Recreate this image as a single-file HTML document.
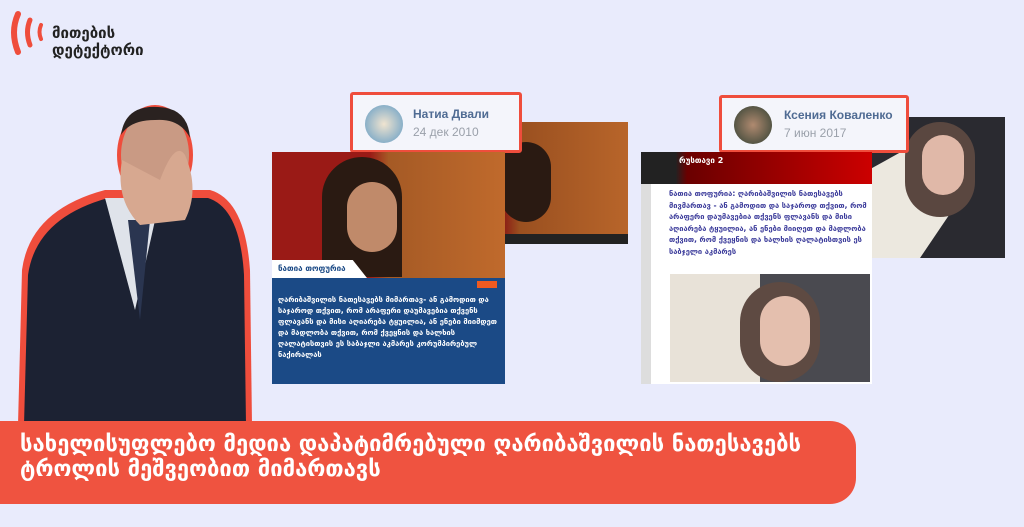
<!DOCTYPE html>
<html><head><meta charset="utf-8"><style>
*{margin:0;padding:0;box-sizing:border-box}
body{width:1024px;height:527px;background:#e9ebfc;position:relative;overflow:hidden;font-family:"Liberation Sans","DejaVu Sans",sans-serif}
.abs{position:absolute}
.namecard{background:#f4f5fb;border:3px solid #ef4d3c;border-radius:3px}
.nm{color:#4f6b93;font-weight:bold;font-size:12px;white-space:nowrap}
.dt{color:#9aa0aa;font-size:12px}
</style></head><body>
<!-- logo -->
<svg class="abs" style="left:8px;top:8px" width="45" height="50"><g fill="none" stroke="#ef4d3c" stroke-linecap="round"><path d="M10 6 Q2 24 10 44" stroke-width="6"/><path d="M22 12 Q17 24 22 37" stroke-width="5"/><path d="M33 17 Q30 24 33 31" stroke-width="4"/></g></svg>
<div class="abs" style="left:52px;top:25px;font:bold 15px 'DejaVu Sans',sans-serif;color:#222;line-height:17px">მითების<br>დეტექტორი</div>
<!-- person -->
<svg class="abs" style="left:10px;top:80px" width="250" height="345">
<path d="M8 345 L12 190 Q20 130 95 110 L200 110 Q235 120 240 190 L242 345Z" fill="#ef4d3c"/>
<path d="M14 345 L18 195 Q26 138 98 118 L198 118 Q230 128 234 195 L236 345Z" fill="#1c2233"/>
<path d="M95 118 L125 230 L150 118Z" fill="#dfe3ea"/>
<path d="M118 140 L130 240 L140 140Z" fill="#2a3550"/>
<ellipse cx="145" cy="75" rx="38" ry="50" fill="#ef4d3c"/>
<ellipse cx="145" cy="75" rx="34" ry="46" fill="#c99a84"/>
<path d="M111 55 Q115 25 148 27 Q178 28 180 58 Q170 38 145 40 Q120 40 111 55Z" fill="#2a2220"/>
<path d="M112 80 Q105 120 130 145 L175 140 Q190 110 175 75 Q165 60 150 100Z" fill="#d7a890"/>
</svg>
<!-- left group -->
<div class="abs" style="left:461px;top:122px;width:167px;height:122px;background:linear-gradient(90deg,#8a1a14 0 25%,#9a5020 35%,#b8652a 100%)"><div style="position:absolute;left:40px;top:20px;width:50px;height:80px;border-radius:25px;background:#2a1a12"></div><div style="position:absolute;bottom:0;width:100%;height:10px;background:#222"></div></div>
<div class="abs namecard" style="left:350px;top:92px;width:172px;height:61px"><div style="position:absolute;left:12px;top:10px;width:38px;height:38px;border-radius:50%;background:radial-gradient(#f0e4d0,#8ab0c8 70%,#c0807a)"></div><div class="nm" style="position:absolute;left:60px;top:12px">Натиа Двали</div><div class="dt" style="position:absolute;left:60px;top:30px">24 дек 2010</div></div>
<div class="abs" style="left:272px;top:152px;width:233px;height:126px;background:linear-gradient(90deg,#9a1a16 0 42%,#a55a25 50%,#c06a2c 100%)"><div style="position:absolute;left:50px;top:5px;width:80px;height:120px;border-radius:40px 40px 0 0;background:#2a1a12"></div><div style="position:absolute;left:75px;top:30px;width:50px;height:70px;border-radius:25px;background:#c08a6a"></div><div style="position:absolute;left:0;bottom:0;width:95px;height:18px;background:#fff;clip-path:polygon(0 0,85% 0,100% 100%,0 100%);font:bold 8px 'DejaVu Sans';color:#1b4a86;padding:4px 6px">ნათია თოფურია</div></div>
<div class="abs" style="left:272px;top:278px;width:233px;height:106px;background:#1b4a86;color:#fff;font:bold 7.5px 'DejaVu Sans',sans-serif;line-height:11px;padding:16px 6px 0 6px"><div style="position:absolute;right:8px;top:3px;background:#ef5a20;width:20px;height:7px"></div>ღარიბაშვილის ნათესავებს მიმართავ- ან გამოდით და საჯაროდ თქვით, რომ არაფერი დაუმავებია თქვენს ფლავანს და მისი აღიარება ტყუილია, ან ენები მიიმდეთ და მადლობა თქვით, რომ ქვეყნის და ხალხის ღალატისთვის ეს საბაჯლი აკმარეს კორუმპირებულ ნაქირალას</div>
<!-- right group -->
<div class="abs" style="left:850px;top:117px;width:155px;height:141px;background:#2a2a30"><div style="position:absolute;left:0;top:30px;width:100px;height:111px;background:#ece8df;clip-path:polygon(0 30%,60% 0,100% 60%,70% 100%,0 100%)"></div><div style="position:absolute;left:55px;top:5px;width:70px;height:95px;border-radius:35px;background:#5a4740"></div><div style="position:absolute;left:72px;top:18px;width:42px;height:60px;border-radius:21px;background:#e0b8a8"></div></div>
<div class="abs namecard" style="left:719px;top:95px;width:190px;height:58px"><div style="position:absolute;left:12px;top:8px;width:38px;height:38px;border-radius:50%;background:radial-gradient(#b08a70,#554 70%)"></div><div class="nm" style="position:absolute;left:62px;top:10px">Ксения Коваленко</div><div class="dt" style="position:absolute;left:62px;top:28px">7 июн 2017</div></div>
<div class="abs" style="left:641px;top:152px;width:231px;height:232px;background:#fff">
<div style="height:32px;background:linear-gradient(90deg,#222 0 15%,#6a0000 20%,#c00 100%);color:#fff;font:bold 8px 'DejaVu Sans';padding:4px 38px">რუსთავი 2</div>
<div style="position:absolute;left:0;top:32px;width:10px;height:200px;background:#ddd"></div>
<div style="position:absolute;left:28px;top:36px;width:200px;font:bold 7.5px 'DejaVu Sans',sans-serif;color:#3a3a9a;line-height:11.5px">ნათია თოფურია: ღარიბაშვილის ნათესავებს მივმართავ - ან გამოდით და საჯაროდ თქვით, რომ არაფერი დაუმავებია თქვენს ფლავანს და მისი აღიარება ტყუილია, ან ენები მიიღეთ და მადლობა თქვით, რომ ქვეყნის და ხალხის ღალატისთვის ეს საბჯელი აკმარეს</div>
<div style="position:absolute;left:29px;top:122px;width:200px;height:108px;background:#4a4a50"><div style="position:absolute;left:0;top:0;width:90px;height:108px;background:#e8e2d8"></div><div style="position:absolute;left:70px;top:8px;width:80px;height:100px;border-radius:40px;background:#5e4a42"></div><div style="position:absolute;left:90px;top:22px;width:50px;height:70px;border-radius:25px;background:#e4bfae"></div></div>
</div>
<!-- banner -->
<div class="abs" style="left:0;top:421px;width:856px;height:83px;background:#ef5340;border-radius:0 26px 26px 0;color:#fff;font:bold 22px 'DejaVu Sans',sans-serif;line-height:25px;padding:11px 0 0 20px;white-space:nowrap">სახელისუფლებო მედია დაპატიმრებული ღარიბაშვილის ნათესავებს<br>ტროლის მეშვეობით მიმართავს</div>
</body></html>
